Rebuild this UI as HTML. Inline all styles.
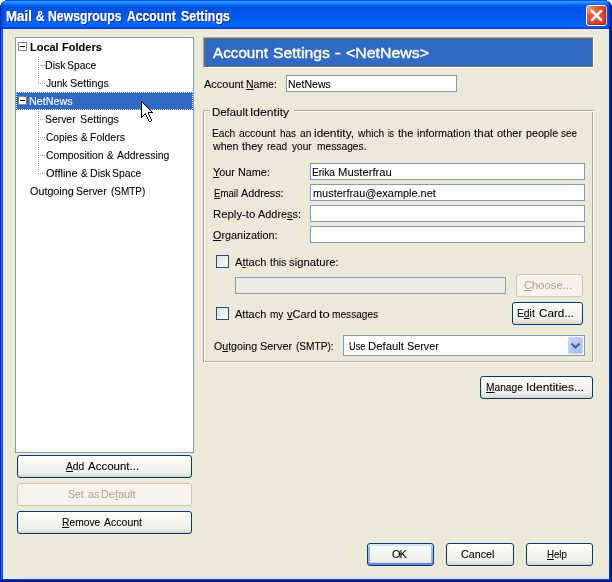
<!DOCTYPE html>
<html lang="en">
<head>
<meta charset="utf-8">
<title>Mail &amp; Newsgroups Account Settings</title>
<style>
*{box-sizing:border-box;margin:0;padding:0}
html,body{width:612px;height:582px;overflow:hidden;background:#fff}
body{-webkit-text-stroke:.08px;font-family:"Liberation Sans",sans-serif;font-size:11px;color:#000;line-height:13px;-webkit-font-smoothing:none}
.abs,.win *{position:absolute}
.win{will-change:transform;position:absolute;left:0;top:0;width:612px;height:582px;background:#ece9d8;overflow:hidden}
.tb{left:0;top:0;width:612px;height:29px;background:linear-gradient(180deg,#0058ee 0px 1px,#3593ff 1px 2px,#288eff 2px 3px,#127dff 3px 4px,#036ffc 4px 5px,#0262ee 5px 6px,#0057e5 6px 7px,#0054e3 7px 8px,#0054e3 8px 9px,#0054e3 9px 10px,#0054e3 10px 11px,#0054e4 11px 12px,#0055e5 12px 13px,#0055e6 13px 14px,#0056e8 14px 15px,#0057ea 15px 16px,#0058ed 16px 17px,#005af0 17px 18px,#005cf4 18px 19px,#005ff8 19px 20px,#0062fb 20px 21px,#0265fe 21px 22px,#0266fe 22px 23px,#0266ff 23px 24px,#0266ff 24px 25px,#0264fd 25px 26px,#005df5 26px 27px,#004ee4 27px 28px,#0040d4 28px 29px)}
.tb .t{left:7px;top:8px;-webkit-text-stroke:.25px;font-family:"Liberation Sans",sans-serif;font-weight:bold;font-size:14.3px;line-height:16px;color:#fff;white-space:nowrap;text-shadow:1px 1px 0 #0a1883;letter-spacing:0}
.cn{left:0;top:0;width:612px;height:6px}.cn i{background:#fff}
.tl{left:0;top:0;width:8px;height:29px;background:linear-gradient(90deg,rgba(0,30,160,.85) 0,rgba(0,50,200,.45) 2px,rgba(0,60,220,.15) 4px,rgba(0,60,220,0) 8px)}
.tr{left:604px;top:0;width:8px;height:29px;background:linear-gradient(270deg,rgba(0,19,140,.95) 0,rgba(0,30,170,.8) 2px,rgba(0,50,210,.4) 4px,rgba(0,60,220,0) 8px)}
.bl{left:0;top:29px;width:3px;height:553px;background:linear-gradient(90deg,#0019cf 0 1px,#166aee 1px 2px,#0855dd 2px 3px)}
.br{left:609px;top:29px;width:3px;height:551px;z-index:2;background:linear-gradient(90deg,#003fe4 0 1px,#001ea0 1px 2px,#00138c 2px 3px)}
.bb{left:0;top:579px;width:612px;height:3px;background:linear-gradient(180deg,#003fe4 0 1px,#001ea0 1px 2px,#00138c 2px 3px)}
.close{left:586px;top:5px;width:21px;height:21px;border:1px solid #fff;border-radius:3px;background:radial-gradient(circle at 15% 15%,#f0a48c 0,#e45c3e 28%,#dc4522 65%,#c43210 100%);box-shadow:inset -1px -1px 1px #b02c0c}
.tree{left:15px;top:37px;width:179px;height:416px;background:#fff;border:1px solid #7f9db9}
.row{left:0;width:177px;height:18px;white-space:nowrap}
.row span{top:3px;line-height:13px}
.tw{left:2px;top:4px;width:9px;height:9px;border:1px solid #848284;background:#fff}
.tw i{left:1px;top:3px;width:5px;height:1px;background:#000}
.vd{left:22px;width:1px;background:repeating-linear-gradient(180deg,#aca899 0 1px,transparent 1px 2px)}
.hd{left:22px;width:7px;height:1px;background:repeating-linear-gradient(90deg,#aca899 0 1px,transparent 1px 2px)}
.sel{background:#316ac5;color:#fff}
.fr{left:0;top:0;width:177px;height:18px;background:
repeating-linear-gradient(90deg,#efe6ce 0 1px,transparent 1px 2px) 0 0/177px 1px no-repeat,
repeating-linear-gradient(90deg,transparent 0 1px,#efe6ce 1px 2px) 0 17px/177px 1px no-repeat,
repeating-linear-gradient(180deg,#efe6ce 0 1px,transparent 1px 2px) 0 0/1px 18px no-repeat,
repeating-linear-gradient(180deg,#efe6ce 0 1px,transparent 1px 2px) 176px 0/1px 18px no-repeat}
.btn{border:1px solid #003c74;border-radius:3px;background:linear-gradient(180deg,#fff 0,#fafaf7 14%,#f5f4ef 45%,#f0efe8 78%,#e6e3da 88%,#d8d2c6 100%);white-space:nowrap;line-height:13px}
.win u{position:static}
.lg{left:209px;top:110px;width:85px;height:2px;background:#ece9d8}
.dd{left:224px;top:1px;width:15px;height:17px;border-radius:2px;background:linear-gradient(135deg,#cbd8fc,#b4c6f6 55%,#a4b9f0);box-shadow:inset 0 0 0 1px #c4d2fb}
.def{box-shadow:inset 0 0 0 1px #fff0,inset 0 2px 0 #cee7ff,inset 0 -2px 0 #6982ee,inset 2px 0 0 #98b8ea,inset -2px 0 0 #98b8ea}
.btn u, label u, .lb u{text-decoration:underline}
.dis{border-color:#c9c7ba;color:#aca899;background:#f5f4ea}
.hdr{left:203px;top:37px;width:391px;height:31px;background:#316ac5;color:#fff;font-size:14px;line-height:17px;border:1px solid;border-color:#aca899 #fff #fff #aca899;box-shadow:inset 0 0 0 1px #716f64}
.hdr span{top:7px;white-space:pre;-webkit-text-stroke:.35px}
.lb{white-space:nowrap;line-height:13px}
.w{top:0;white-space:pre}
.inp{height:17px;background:#fff;border:1px solid #7f9db9;white-space:nowrap}
.inp span{left:2px;top:2px;line-height:13px}
.fs{left:203px;top:110px;width:391px;height:253px;border:1px solid;border-color:#aca899 #fff #fff #aca899;box-shadow:inset 1px 1px 0 #fff,inset -1px -1px 0 #aca899}
.cb{width:13px;height:13px;border:1px solid #1c5180;background:linear-gradient(135deg,#dcdcd7,#fff)}
</style>
</head>
<body>
<div class="win">
  <div class="tb"><div class="t" style="left:7px;width:240px;height:16px"><span class="w" id="tw0" style="left:-1px;transform:scaleX(0.929);transform-origin:0 50%">Mail </span><span class="w" id="tw1" style="left:29px;transform:scaleX(0.82);transform-origin:0 50%">&amp; </span><span class="w" id="tw2" style="left:41px;transform:scaleX(0.856);transform-origin:0 50%">Newsgroups </span><span class="w" id="tw3" style="left:120px;transform:scaleX(0.853);transform-origin:0 50%">Account </span><span class="w" id="tw4" style="left:174px;transform:scaleX(0.867);transform-origin:0 50%">Settings</span></div>
    <div class="close"><svg width="19" height="19" viewBox="0 0 19 19" style="left:0;top:0"><path d="M5 5 L14 14 M14 5 L5 14" stroke="#fff" stroke-width="2.5" stroke-linecap="round" fill="none"/></svg></div>
  </div>
  <div class="tl"></div><div class="tr"></div>
  <div class="cn">
    <i style="left:0;top:0;width:5px;height:1px"></i><i style="left:0;top:1px;width:3px;height:1px"></i><i style="left:0;top:2px;width:2px;height:1px"></i><i style="left:0;top:3px;width:1px;height:2px"></i>
    <i style="left:607px;top:0;width:5px;height:1px"></i><i style="left:609px;top:1px;width:3px;height:1px"></i><i style="left:610px;top:2px;width:2px;height:1px"></i><i style="left:611px;top:3px;width:1px;height:2px"></i>
  </div>
  <div class="bl"></div><div class="br"></div><div class="bb"></div>

  <div class="tree">
    <div class="row" style="top:0"><div class="tw"><i></i></div><span id="t1_0" style="left:14px;font-weight:bold;transform:scaleX(0.996);transform-origin:0 50%">Local </span><span id="t1_1" style="left:46px;font-weight:bold;transform:scaleX(1.002);transform-origin:0 50%">Folders</span></div>
    <div class="row" style="top:18px"><span id="t2_0" style="left:29px;transform:scaleX(0.963);transform-origin:0 50%">Disk </span><span id="t2_1" style="left:51px;transform:scaleX(0.941);transform-origin:0 50%">Space</span></div>
    <div class="row" style="top:36px"><span id="t3_0" style="left:30px;transform:scaleX(0.922);transform-origin:0 50%">Junk </span><span id="t3_1" style="left:54px;transform:scaleX(0.977);transform-origin:0 50%">Settings</span></div>
    <div class="row sel" style="top:54px"><div class="fr"></div><div class="tw"><i></i></div><span id="t4" style="left:13px;transform:scaleX(0.979);transform-origin:0 50%">NetNews</span></div>
    <div class="row" style="top:72px"><span id="t5_0" style="left:29px;transform:scaleX(0.945);transform-origin:0 50%">Server </span><span id="t5_1" style="left:64px;transform:scaleX(0.977);transform-origin:0 50%">Settings</span></div>
    <div class="row" style="top:90px"><span id="t6_0" style="left:30px;transform:scaleX(0.921);transform-origin:0 50%">Copies </span><span id="t6_1" style="left:65px;transform:scaleX(0.888);transform-origin:0 50%">&amp; </span><span id="t6_2" style="left:74px;transform:scaleX(0.951);transform-origin:0 50%">Folders</span></div>
    <div class="row" style="top:108px"><span id="t7_0" style="left:30px;transform:scaleX(0.941);transform-origin:0 50%">Composition </span><span id="t7_1" style="left:91px;transform:scaleX(0.888);transform-origin:0 50%">&amp; </span><span id="t7_2" style="left:101px;transform:scaleX(0.951);transform-origin:0 50%">Addressing</span></div>
    <div class="row" style="top:126px"><span id="t8_0" style="left:30px">Offline </span><span id="t8_1" style="left:65px;transform:scaleX(0.888);transform-origin:0 50%">&amp; </span><span id="t8_2" style="left:74px;transform:scaleX(0.963);transform-origin:0 50%">Disk </span><span id="t8_3" style="left:96px;transform:scaleX(0.941);transform-origin:0 50%">Space</span></div>
    <div class="vd" style="top:19px;height:27px"></div><div class="hd" style="top:27px"></div><div class="hd" style="top:45px"></div>
    <div class="vd" style="top:73px;height:63px"></div><div class="hd" style="top:81px"></div><div class="hd" style="top:99px"></div><div class="hd" style="top:117px"></div><div class="hd" style="top:135px"></div>
    <div class="row" style="top:144px"><span id="t9_0" style="left:14px;transform:scaleX(0.98);transform-origin:0 50%">Outgoing </span><span id="t9_1" style="left:60px;transform:scaleX(0.945);transform-origin:0 50%">Server </span><span id="t9_2" style="left:95px;transform:scaleX(0.903);transform-origin:0 50%">(SMTP)</span></div>
  </div>

  <div class="btn" style="left:17px;top:455px;width:175px;height:23px"><span class="lb" id="b1_0" style="left:48px;top:4px;transform:scaleX(0.931);transform-origin:0 50%"><u>A</u>dd </span><span class="lb" id="b1_1" style="left:70px;top:4px;transform:scaleX(1.045);transform-origin:0 50%">Account...</span></div>
  <div class="btn dis" style="left:17px;top:483px;width:175px;height:23px"><span class="lb" id="b2_0" style="left:50px;top:4px;transform:scaleX(0.939);transform-origin:0 50%">Set </span><span class="lb" id="b2_1" style="left:70px;top:4px;transform:scaleX(0.987);transform-origin:0 50%">as </span><span class="lb" id="b2_2" style="left:83px;top:4px;transform:scaleX(0.987);transform-origin:0 50%">De<u>f</u>ault</span></div>
  <div class="btn" style="left:17px;top:511px;width:175px;height:23px"><span class="lb" id="b3_0" style="left:44px;top:4px;transform:scaleX(0.934);transform-origin:0 50%"><u>R</u>emove </span><span class="lb" id="b3_1" style="left:86px;top:4px;transform:scaleX(0.956);transform-origin:0 50%">Account</span></div>

  <div class="hdr"><span id="h1" style="left:9px;transform:scaleX(1.088);transform-origin:0 50%">Account </span><span id="h2" style="left:69px;transform:scaleX(1.124);transform-origin:0 50%">Settings </span><span id="h3" style="left:131.8px;transform:scaleX(1.3);transform-origin:50% 50%">- </span><span id="h4" style="left:142px;transform:scaleX(1.135);transform-origin:0 50%">&lt;NetNews&gt;</span></div>
  <div class="lb" id="l1_0" style="left:204px;top:78px;transform:scaleX(0.997);transform-origin:0 50%">Account </div><div class="lb" id="l1_1" style="left:246px;top:78px;transform:scaleX(0.952);transform-origin:0 50%"><u>N</u>ame:</div>
  <div class="inp" style="left:286px;top:75px;width:171px"><span id="i1" style="left:1px;transform:scaleX(0.959);transform-origin:0 50%">NetNews</span></div>

  <div class="fs"></div>
  <div class="lg"></div>
  <div class="lb" id="l2_0" style="left:212px;top:106px;transform:scaleX(1.038);transform-origin:0 50%">Default </div><div class="lb" id="l2_1" style="left:250px;top:106px;transform:scaleX(1.102);transform-origin:0 50%">Identity</div>
  <div class="lb" style="left:213px;top:127px;width:370px;height:13px"><span class="w" id="p0" style="left:-1px;transform:scaleX(0.925);transform-origin:0 50%">Each </span><span class="w" id="p1" style="left:26px;transform:scaleX(0.954);transform-origin:0 50%">account </span><span class="w" id="p2" style="left:67px;transform:scaleX(0.9);transform-origin:0 50%">has </span><span class="w" id="p3" style="left:87px;transform:scaleX(0.925);transform-origin:0 50%">an </span><span class="w" id="p4" style="left:101px;transform:scaleX(1.078);transform-origin:0 50%">identity, </span><span class="w" id="p5" style="left:145px;transform:scaleX(0.936);transform-origin:0 50%">which </span><span class="w" id="p6" style="left:175px;transform:scaleX(0.759);transform-origin:0 50%">is </span><span class="w" id="p7" style="left:185px">the </span><span class="w" id="p8" style="left:204px;transform:scaleX(0.983);transform-origin:0 50%">information </span><span class="w" id="p9" style="left:261px;transform:scaleX(1.05);transform-origin:0 50%">that </span><span class="w" id="p10" style="left:284px">other </span><span class="w" id="p11" style="left:313px;transform:scaleX(0.973);transform-origin:0 50%">people </span><span class="w" id="p12" style="left:348px;transform:scaleX(0.897);transform-origin:0 50%">see</span></div>
  <div class="lb" style="left:213px;top:140px;width:370px;height:13px"><span class="w" id="q0" style="left:0px;transform:scaleX(0.965);transform-origin:0 50%">when </span><span class="w" id="q1" style="left:29px">they </span><span class="w" id="q2" style="left:54px;transform:scaleX(0.916);transform-origin:0 50%">read </span><span class="w" id="q3" style="left:79px;transform:scaleX(0.916);transform-origin:0 50%">your </span><span class="w" id="q4" style="left:104px;transform:scaleX(0.931);transform-origin:0 50%">messages.</span></div>

  <div class="lb" id="l5_0" style="left:213px;top:166px;transform:scaleX(0.984);transform-origin:0 50%"><u>Y</u>our </div><div class="lb" id="l5_1" style="left:238px;top:166px;transform:scaleX(0.984);transform-origin:0 50%">Name:</div>
  <div class="inp" style="left:310px;top:163px;width:275px"><span id="i2_0" style="left:1px;transform:scaleX(0.917);transform-origin:0 50%">Erika </span><span id="i2_1" style="left:27px;transform:scaleX(1.024);transform-origin:0 50%">Musterfrau</span></div>
  <div class="lb" id="l6_0" style="left:214px;top:187px;transform:scaleX(0.873);transform-origin:0 50%"><u>E</u>mail </div><div class="lb" id="l6_1" style="left:241px;top:187px;transform:scaleX(0.98);transform-origin:0 50%">Address:</div>
  <div class="inp" style="left:310px;top:184px;width:275px"><span id="i3" style="left:2px;transform:scaleX(0.993);transform-origin:0 50%">musterfrau@example.net</span></div>
  <div class="lb" id="l7_0" style="left:213px;top:208px;transform:scaleX(1.034);transform-origin:0 50%">Reply-to </div><div class="lb" id="l7_1" style="left:258px;top:208px;transform:scaleX(0.99);transform-origin:0 50%">Addre<u>s</u>s:</div>
  <div class="inp" style="left:310px;top:205px;width:275px"></div>
  <div class="lb" id="l8" style="left:213px;top:229px;transform:scaleX(0.986);transform-origin:0 50%"><u>O</u>rganization:</div>
  <div class="inp" style="left:310px;top:226px;width:275px"></div>

  <div class="cb" style="left:216px;top:255px"></div>
  <div class="lb" id="l9_0" style="left:235px;top:256px;transform:scaleX(1.009);transform-origin:0 50%">A<u>t</u>tach </div><div class="lb" id="l9_1" style="left:270px;top:256px;transform:scaleX(0.956);transform-origin:0 50%">this </div><div class="lb" id="l9_2" style="left:289px;top:256px;transform:scaleX(1.028);transform-origin:0 50%">signature:</div>
  <div class="inp" style="left:235px;top:277px;width:271px;background:#ebebe4"></div>
  <div class="btn dis" style="left:516px;top:274px;width:67px;height:23px"><span id="b4" class="lb" style="left:7px;top:4px;transform:scaleX(1.02);transform-origin:0 50%"><u>C</u>hoose...</span></div>

  <div class="cb" style="left:216px;top:307px"></div>
  <div class="lb" id="l10_0" style="left:235px;top:308px;transform:scaleX(1.005);transform-origin:0 50%">Attach </div><div class="lb" id="l10_1" style="left:270px;top:308px;transform:scaleX(0.913);transform-origin:0 50%">my </div><div class="lb" id="l10_2" style="left:287px;top:308px;transform:scaleX(1.007);transform-origin:0 50%"><u>v</u>Card </div><div class="lb" id="l10_3" style="left:319px;top:308px;transform:scaleX(1.181);transform-origin:0 50%">to </div><div class="lb" id="l10_4" style="left:332px;top:308px;transform:scaleX(0.921);transform-origin:0 50%">messages</div>
  <div class="btn" style="left:512px;top:302px;width:71px;height:23px"><span class="lb" id="b5_0" style="left:4px;top:4px;transform:scaleX(0.936);transform-origin:0 50%">E<u>d</u>it </span><span class="lb" id="b5_1" style="left:26px;top:4px;transform:scaleX(1.062);transform-origin:0 50%">Card...</span></div>

  <div class="lb" id="l11_0" style="left:214px;top:340px;transform:scaleX(0.964);transform-origin:0 50%">O<u>u</u>tgoing </div><div class="lb" id="l11_1" style="left:260px;top:340px;transform:scaleX(0.993);transform-origin:0 50%">Server </div><div class="lb" id="l11_2" style="left:296px;top:340px;transform:scaleX(0.92);transform-origin:0 50%">(SMTP):</div>
  <div class="inp" style="left:343px;top:335px;width:242px;height:21px"><span id="i4_0" style="left:5px;top:4px;transform:scaleX(0.837);transform-origin:0 50%">Use </span><span id="i4_1" style="left:24px;top:4px;transform:scaleX(1.033);transform-origin:0 50%">Default </span><span id="i4_2" style="left:63px;top:4px;transform:scaleX(0.981);transform-origin:0 50%">Server</span>
    <div class="dd"><svg width="15" height="17" viewBox="0 0 15 17" style="left:0;top:0"><path d="M3.5 6.5 L7.5 10.5 L11.5 6.5" stroke="#4d6185" stroke-width="2.2" fill="none"/></svg></div>
  </div>

  <div class="btn" style="left:480px;top:376px;width:113px;height:23px"><span class="lb" id="b6_0" style="left:5px;top:4px;transform:scaleX(0.928);transform-origin:0 50%"><u>M</u>anage </span><span class="lb" id="b6_1" style="left:45px;top:4px;transform:scaleX(1.09);transform-origin:0 50%">Identities...</span></div>

  <div class="btn def" style="left:367px;top:543px;width:67px;height:23px"><span id="b7" class="lb" style="left:24px;top:4px;letter-spacing:-1px">OK</span></div>
  <div class="btn" style="left:446px;top:543px;width:68px;height:23px"><span id="b8" class="lb" style="left:14px;top:4px;transform:scaleX(0.974);transform-origin:0 50%">Cancel</span></div>
  <div class="btn" style="left:526px;top:543px;width:67px;height:23px"><span id="b9" class="lb" style="left:20px;top:4px;transform:scaleX(0.879);transform-origin:0 50%"><u>H</u>elp</span></div>

  <svg class="cur" width="12" height="21" viewBox="0 0 12 21" shape-rendering="crispEdges" style="left:141px;top:101px"><path d="M1 2h1v1h-1zM1 3h2v1h-2zM1 4h3v1h-3zM1 5h4v1h-4zM1 6h5v1h-5zM1 7h6v1h-6zM1 8h7v1h-7zM1 9h8v1h-8zM1 10h9v1h-9zM1 11h6v1h-6zM1 12h3v1h-3zM5 12h2v1h-2zM1 13h2v1h-2zM5 13h2v1h-2zM1 14h1v1h-1zM6 14h2v1h-2zM6 15h2v1h-2zM7 16h2v1h-2zM7 17h2v1h-2zM8 18h2v1h-2zM8 19h2v1h-2z" fill="#fff"/><path d="M0 0h1v1h-1zM0 1h2v1h-2zM0 2h1v1h-1zM2 2h1v1h-1zM0 3h1v1h-1zM3 3h1v1h-1zM0 4h1v1h-1zM4 4h1v1h-1zM0 5h1v1h-1zM5 5h1v1h-1zM0 6h1v1h-1zM6 6h1v1h-1zM0 7h1v1h-1zM7 7h1v1h-1zM0 8h1v1h-1zM8 8h1v1h-1zM0 9h1v1h-1zM9 9h1v1h-1zM0 10h1v1h-1zM10 10h1v1h-1zM0 11h1v1h-1zM7 11h5v1h-5zM0 12h1v1h-1zM4 12h1v1h-1zM7 12h1v1h-1zM0 13h1v1h-1zM3 13h2v1h-2zM7 13h1v1h-1zM0 14h1v1h-1zM2 14h1v1h-1zM5 14h1v1h-1zM8 14h1v1h-1zM0 15h2v1h-2zM5 15h1v1h-1zM8 15h1v1h-1zM0 16h1v1h-1zM6 16h1v1h-1zM9 16h1v1h-1zM6 17h1v1h-1zM9 17h1v1h-1zM7 18h1v1h-1zM10 18h1v1h-1zM7 19h1v1h-1zM10 19h1v1h-1zM8 20h2v1h-2z" fill="#000"/></svg>
</div>
</body>
</html>
